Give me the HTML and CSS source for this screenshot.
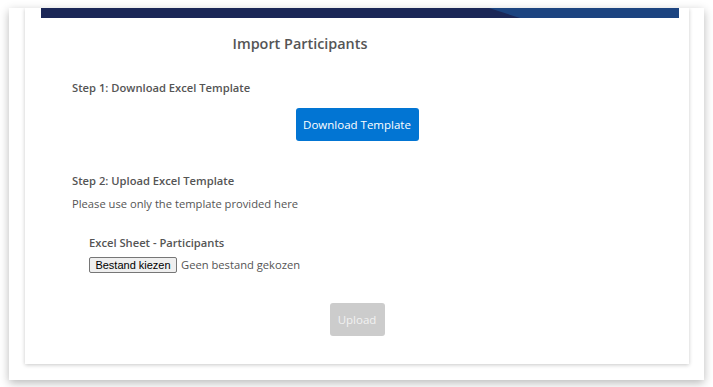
FILE: index.html
```html
<!DOCTYPE html>
<html>
<head>
<meta charset="utf-8">
<link rel="stylesheet" href="styles.css">
</head>
<body>
<div class="frame">
  <div class="card">
    <div class="bar">
      <svg width="638" height="10" viewBox="0 0 638 10">
        <rect x="0" y="0" width="638" height="10" fill="#1b2757"/>
        <polygon points="448,0 638,0 638,10 479,10" fill="#1c4480"/>
      </svg>
    </div>
    <h1 class="title">Import Participants</h1>
    <div class="content">
      <div class="step">Step 1: Download Excel Template</div>
      <div class="center-row">
        <button class="btn btn-primary">Download Template</button>
      </div>
      <div class="step step2">Step 2: Upload Excel Template</div>
      <p class="note">Please use only the template provided here</p>
      <div class="field">
        <div class="field-label">Excel Sheet - Participants</div>
        <div class="file-row">
          <span class="file-btn">Bestand kiezen</span>
          <span class="file-text">Geen bestand gekozen</span>
        </div>
      </div>
    </div>
    <div class="center-row upload-row">
      <button class="btn btn-disabled">Upload</button>
    </div>
  </div>
</div>
</body>
</html>
```

FILE: styles.css
```css
* { box-sizing: border-box; }
html, body { margin: 0; padding: 0; background: #fff; }
body {
  font-family: "Open Sans", "Noto Sans", sans-serif;
  color: #555;
  padding: 8px 9px 7px 9px;
}
.frame {
  width: 695px;
  height: 372px;
  background: #fff;
  box-shadow: 0 3px 9px rgba(0,0,0,0.28);
  overflow: hidden;
  padding: 0 15px 16px 16px;
}
.card {
  background: #fff;
  height: 356px;
  box-shadow: 0 1px 4px rgba(0,0,0,0.22);
  padding: 0 9px 0 16px;
}
.bar { height: 10px; line-height: 0; }
.bar svg { display: block; }
.title {
  margin: 16px 0 0 -16px;
  width: 550px;
  text-align: center;
  font-size: 14.4px;
  line-height: 20px;
  font-weight: 600;
  color: #555;
}
.content { padding-left: 31px; }
.step {
  margin-top: 26px;
  font-size: 11.2px;
  line-height: 16px;
  font-weight: 600;
}
.step2 { margin-top: 32px; }
.center-row {
  display: flex;
  justify-content: center;
  margin-left: -16px;
  margin-right: -9px;
}
.content .center-row { margin-left: -47px; }
.btn {
  font-family: "Open Sans", "Noto Sans", sans-serif;
  font-size: 11.5px;
  white-space: nowrap;
  border: none;
  border-radius: 3px;
  height: 33px;
  color: #fff;
  padding: 0;
}
.btn-primary {
  margin-top: 12px;
  background: #0275d3;
  width: 123px;
}
.btn-disabled {
  background: #cccccc;
  color: #f2f2f2;
  width: 55px;
}
.note {
  margin: 7px 0 0 0;
  font-size: 11.2px;
  line-height: 16px;
}
.field { margin-left: 17px; }
.field-label {
  margin-top: 23px;
  font-size: 11.2px;
  line-height: 16px;
  font-weight: 600;
}
.file-row {
  margin-top: 6px;
  display: flex;
  align-items: center;
  gap: 4px;
  height: 16px;
}
.file-btn {
  font-family: "Liberation Sans", Arial, sans-serif;
  font-size: 11px;
  color: #000;
  background: #efefef;
  border: 1px solid #767676;
  border-radius: 2px;
  height: 16px;
  width: 88px;
  display: flex;
  align-items: center;
  justify-content: center;
}
.file-text {
  font-size: 11.2px;
  line-height: 16px;
}
.upload-row { margin-top: 30px; }
```
